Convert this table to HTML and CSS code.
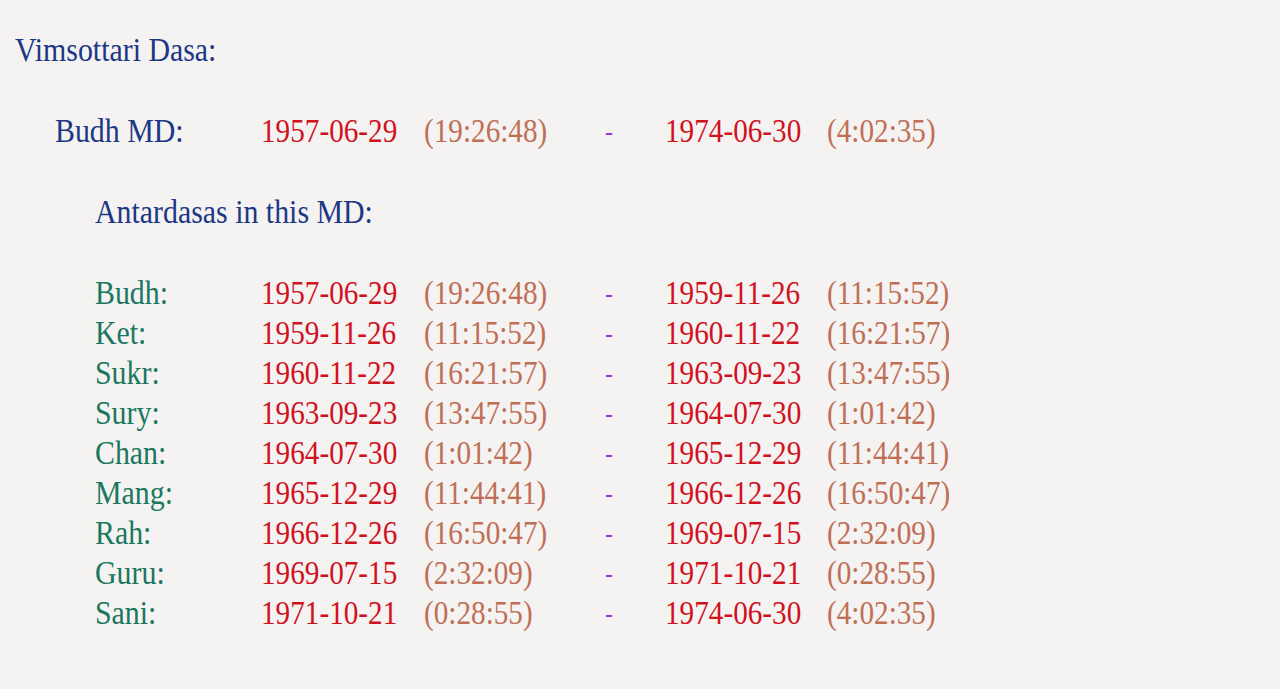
FILE: index.html
```html
<!DOCTYPE html>
<html>
<head>
<meta charset="utf-8">
<link rel="stylesheet" href="styles.css">
</head>
<body>
<div class="page">
  <div class="title"><span class="txt">Vimsottari Dasa:</span></div>
  <div class="row md">
    <span class="lbl md-lbl">Budh MD:</span>
    <span class="date">1957-06-29</span>
    <span class="time">(19:26:48)</span>
    <span class="dash">-</span>
    <span class="date">1974-06-30</span>
    <span class="time">(4:02:35)</span>
  </div>
  <div class="sub"><span class="txt">Antardasas in this MD:</span></div>
  <div class="list">
    <div class="row"><span class="lbl">Budh:</span><span class="date">1957-06-29</span><span class="time">(19:26:48)</span><span class="dash">-</span><span class="date">1959-11-26</span><span class="time">(11:15:52)</span></div>
    <div class="row"><span class="lbl">Ket:</span><span class="date">1959-11-26</span><span class="time">(11:15:52)</span><span class="dash">-</span><span class="date">1960-11-22</span><span class="time">(16:21:57)</span></div>
    <div class="row"><span class="lbl">Sukr:</span><span class="date">1960-11-22</span><span class="time">(16:21:57)</span><span class="dash">-</span><span class="date">1963-09-23</span><span class="time">(13:47:55)</span></div>
    <div class="row"><span class="lbl">Sury:</span><span class="date">1963-09-23</span><span class="time">(13:47:55)</span><span class="dash">-</span><span class="date">1964-07-30</span><span class="time">(1:01:42)</span></div>
    <div class="row"><span class="lbl">Chan:</span><span class="date">1964-07-30</span><span class="time">(1:01:42)</span><span class="dash">-</span><span class="date">1965-12-29</span><span class="time">(11:44:41)</span></div>
    <div class="row"><span class="lbl">Mang:</span><span class="date">1965-12-29</span><span class="time">(11:44:41)</span><span class="dash">-</span><span class="date">1966-12-26</span><span class="time">(16:50:47)</span></div>
    <div class="row"><span class="lbl">Rah:</span><span class="date">1966-12-26</span><span class="time">(16:50:47)</span><span class="dash">-</span><span class="date">1969-07-15</span><span class="time">(2:32:09)</span></div>
    <div class="row"><span class="lbl">Guru:</span><span class="date">1969-07-15</span><span class="time">(2:32:09)</span><span class="dash">-</span><span class="date">1971-10-21</span><span class="time">(0:28:55)</span></div>
    <div class="row"><span class="lbl">Sani:</span><span class="date">1971-10-21</span><span class="time">(0:28:55)</span><span class="dash">-</span><span class="date">1974-06-30</span><span class="time">(4:02:35)</span></div>
  </div>
</div>
</body>
</html>
```

FILE: styles.css
```css
html, body {
  margin: 0;
  padding: 0;
  background: #f4f3f2;
}
.page {
  font-family: "Liberation Serif", "Times New Roman", serif;
  font-size: 33px;
  line-height: 40px;
  padding: 30px 0 0 15px;
}
.txt,
.row > span {
  display: inline-block;
  transform: scaleX(0.885);
  transform-origin: 0 50%;
  white-space: nowrap;
}
.txt,
.row > .lbl {
  transform: scaleX(0.905);
}
.title {
  color: #1d3785;
  height: 40px;
}
.row {
  display: grid;
  grid-template-columns: 166px 163px 181px 60px 162px auto;
  height: 40px;
  white-space: nowrap;
}
.md {
  margin-top: 41px;
  padding-left: 40px;
  grid-template-columns: 206px 163px 181px 60px 162px auto;
}
.sub {
  margin: 41px 0 0 80px;
  color: #1d3785;
  height: 40px;
}
.list {
  margin: 41px 0 0 80px;
}
.lbl {
  color: #1a7760;
}
.md-lbl {
  color: #1d3785;
}
.date {
  color: #d0121f;
}
.time {
  color: #c06f56;
}
.dash {
  color: #9a3ad6;
  font-size: 27px;
}
```
